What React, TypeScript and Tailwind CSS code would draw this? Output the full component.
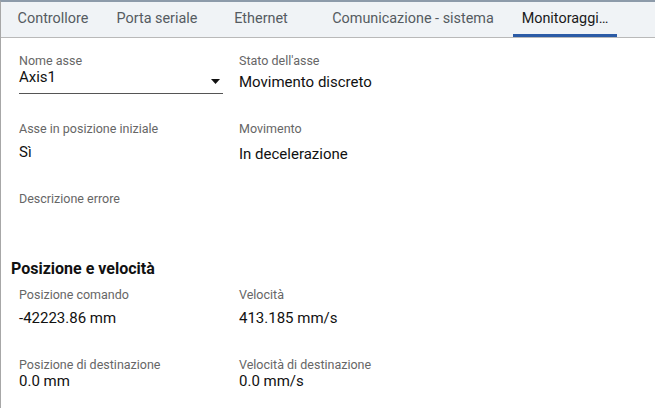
import React from "react";

const tabs = [
  { label: "Controllore", w: "w-[104px]" },
  { label: "Porta seriale", w: "w-[104px]" },
  { label: "Ethernet", w: "w-[104px]" },
  { label: "Comunicazione - sistema", w: "w-[200px]" },
];

function Field({ label, value, gap = "mt-[3px]" }: { label: string; value?: string; gap?: string }) {
  return (
    <div className="flex flex-col">
      <span className="text-[12.5px] leading-[14px] text-[#666666]">{label}</span>
      {value && <span className={`text-[15px] leading-[18px] text-[#111111] ${gap}`}>{value}</span>}
    </div>
  );
}

export default function App() {
  return (
    <div
      className="w-[655px] h-[408px] bg-white border-l border-[#a7a7a7] border-t-2 border-t-[#8d9baa] overflow-hidden"
      style={{ fontFamily: "Roboto, 'Liberation Sans', sans-serif" }}
    >
      {/* tab bar */}
      <div className="flex h-[36px] bg-[#f0f3f6] border-b border-[#b9b9b9]">
        {tabs.map((t) => (
          <div key={t.label} className={`${t.w} flex items-center justify-center pb-[2px] text-[14.4px] text-[#555b61]`}>
            {t.label}
          </div>
        ))}
        <div className="w-[104px] flex flex-col">
          <div className="flex-1 flex items-center justify-center pt-[1px] text-[14.4px] text-[#1a1a1a]">Monitoraggi…</div>
          <div className="h-[3px] bg-[#2b5ba6]" />
        </div>
      </div>

      <div className="pl-[18px] pt-[16px]">
        <div className="grid grid-cols-[220px_1fr]">
          <div className="flex flex-col">
            <span className="text-[12.5px] leading-[14px] text-[#666666]">Nome asse</span>
            <div className="w-[204px] flex justify-between border-b border-[#555555] h-[26px]">
              <span className="text-[15px] leading-[18px] text-[#111111]">Axis1</span>
              <svg width="9" height="5" viewBox="0 0 9 5" className="mr-[3px] mt-[11px]">
                <path d="M0 0 L9 0 L4.5 5 Z" fill="#111" />
              </svg>
            </div>
          </div>
          <Field label="Stato dell'asse" value="Movimento discreto" gap="mt-[5px]" />
        </div>

        <div className="grid grid-cols-[220px_1fr] mt-[28px]">
          <Field label="Asse in posizione iniziale" value="Sì" gap="mt-[7px]" />
          <Field label="Movimento" value="In decelerazione" gap="mt-[9px]" />
        </div>

        <div className="mt-[29px]">
          <Field label="Descrizione errore" />
        </div>
      </div>

      <div className="pl-[10px] mt-[53px] text-[16px] leading-[20px] font-bold text-[#111111]">Posizione e velocità</div>

      <div className="pl-[18px]">
        <div className="grid grid-cols-[220px_1fr] mt-[9px]">
          <Field label="Posizione comando" value="-42223.86 mm" gap="mt-[7px]" />
          <Field label="Velocità" value="413.185 mm/s" gap="mt-[7px]" />
        </div>
        <div className="grid grid-cols-[220px_1fr] mt-[31px]">
          <Field label="Posizione di destinazione" value="0.0 mm" gap="mt-[0px]" />
          <Field label="Velocità di destinazione" value="0.0 mm/s" gap="mt-[0px]" />
        </div>
      </div>
    </div>
  );
}
